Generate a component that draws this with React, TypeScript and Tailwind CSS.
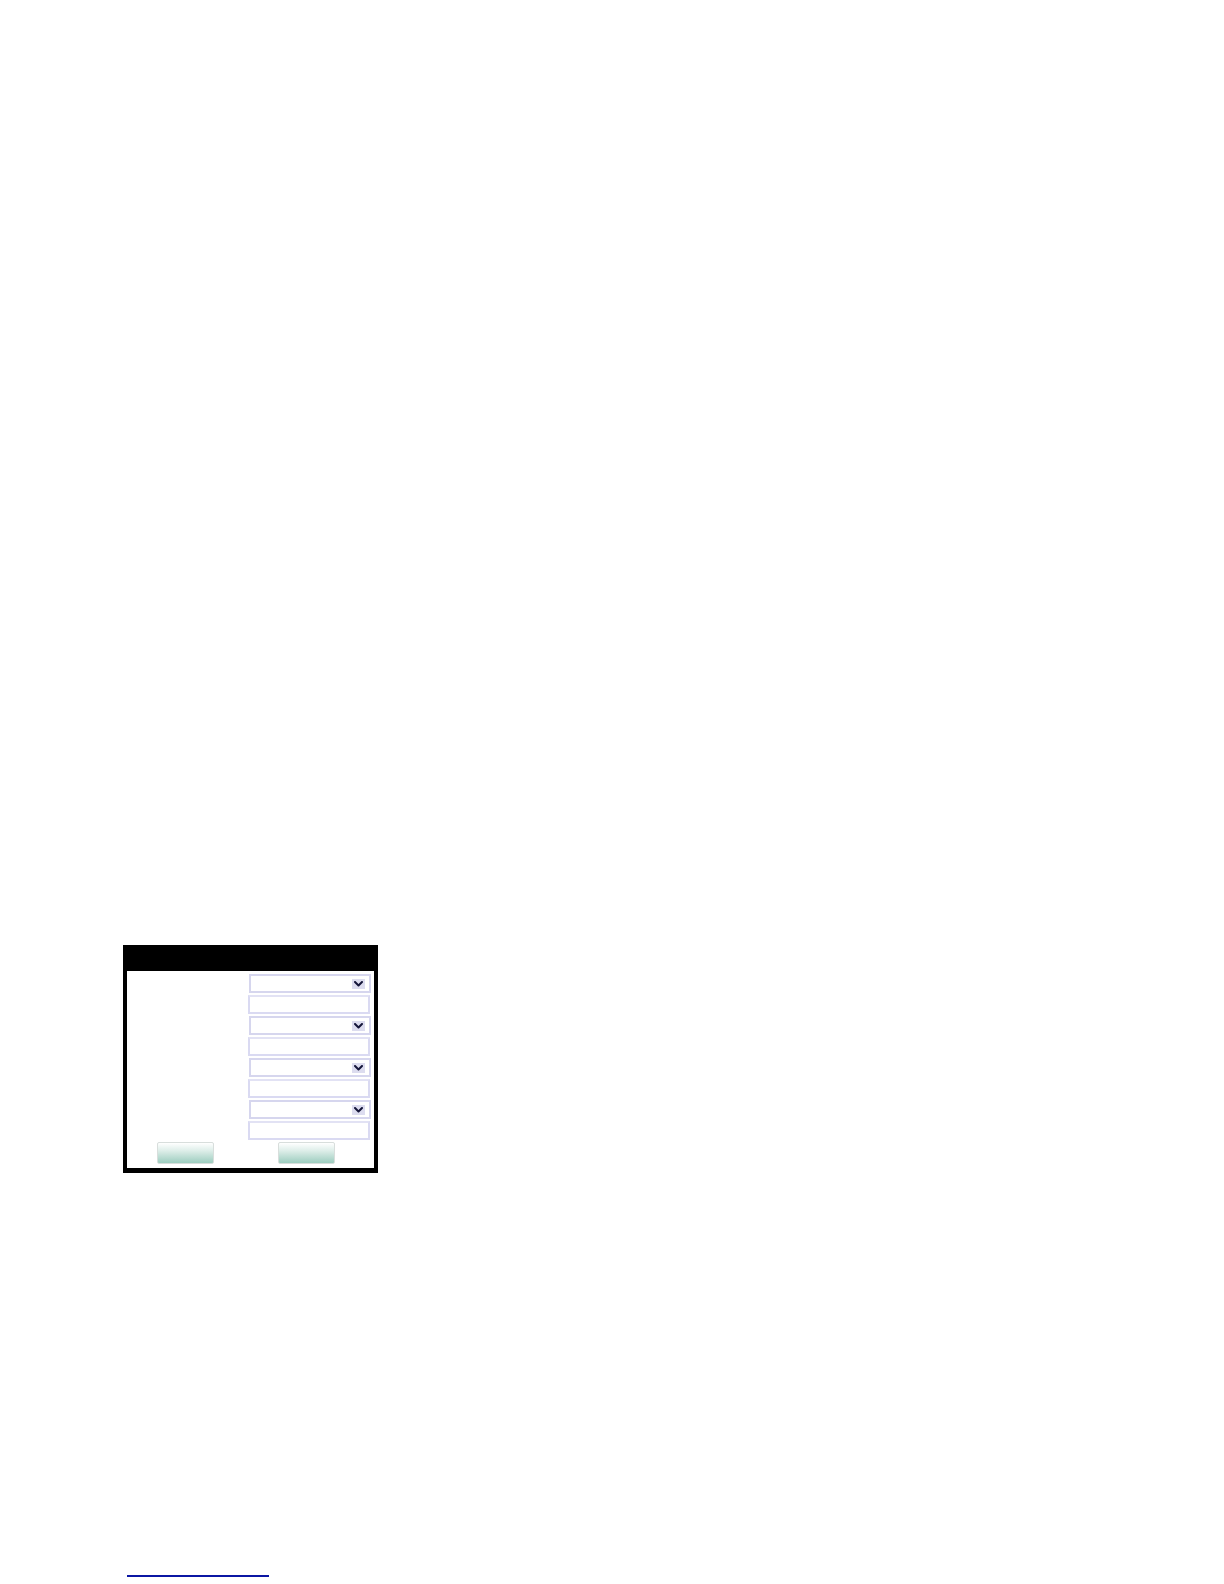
import { ReactNode } from 'react';

function Chevron() {
  return (
    <span className="flex h-[10px] w-[13px] items-center justify-center bg-[#dcdcef]">
      <svg width="9" height="6" viewBox="0 0 9 6" fill="none">
        <path d="M1 1l3.5 3.5L8 1" stroke="#15163a" strokeWidth="2" strokeLinecap="round" strokeLinejoin="round" />
      </svg>
    </span>
  );
}

function SelectBox() {
  return (
    <div className="ml-px flex h-[19px] w-[122px] items-center justify-end border-2 border-[#d6d6ee] bg-white pr-[4px]">
      <Chevron />
    </div>
  );
}

function InputBox() {
  return <div className="h-[19px] w-[122px] border-2 border-[#dadaf2] border-t-[#e2e2f4] bg-white" />;
}

function GradButton({ children }: { children?: ReactNode }) {
  return (
    <div className="h-[22px] w-[57px] rounded-[2px] border border-[#d8dedc] bg-gradient-to-b from-white via-[#dcede8] via-40% to-[#9ccdbf]">
      {children}
    </div>
  );
}

export default function App() {
  return (
    <div className="h-[1584px] w-[1224px] bg-white pt-[945px] font-['Liberation_Sans',sans-serif]">
      <div className="ml-[123px] w-[255px] border-b-[5px] border-l-4 border-r-4 border-black">
        <div className="h-[26px] bg-black" />
        <div className="flex bg-white pt-[3px]">
          <div className="w-[121px]" />
          <div className="flex flex-col gap-[2px]">
            <SelectBox />
            <InputBox />
            <SelectBox />
            <InputBox />
            <SelectBox />
            <InputBox />
            <SelectBox />
            <InputBox />
          </div>
        </div>
        <div className="flex bg-white pb-[4px] pt-[2px]">
          <div className="ml-[30px]">
            <GradButton />
          </div>
          <div className="ml-[64px]">
            <GradButton />
          </div>
        </div>
      </div>
      <div className="ml-[127px] mt-[402px] h-[2px] w-[142px] bg-[#0b16a3]" />
    </div>
  );
}
